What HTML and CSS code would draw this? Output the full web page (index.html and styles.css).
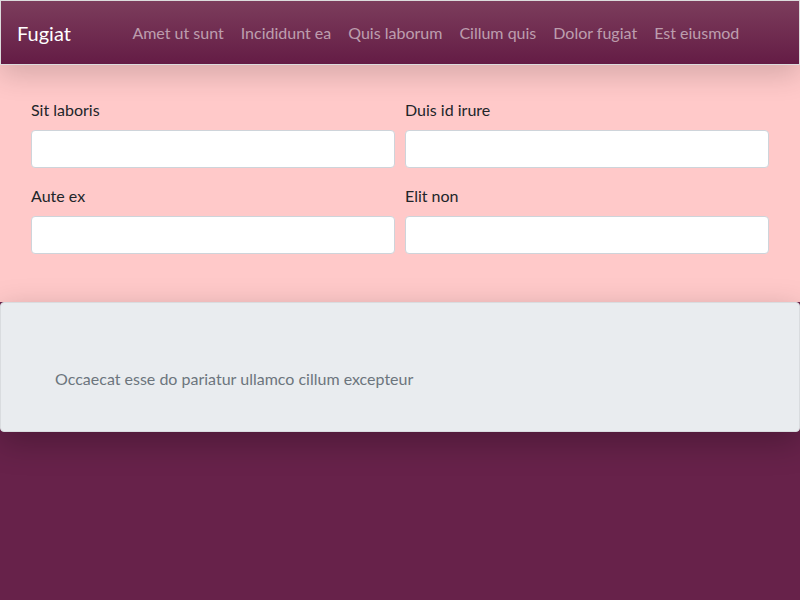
FILE: index.html
```html
<!DOCTYPE html>
<html>
<head>
<meta charset="utf-8">
<link rel="stylesheet" href="styles.css">
</head>
<body>
<nav class="navbar">
  <span class="brand">Fugiat</span>
  <ul class="nav">
    <li><a class="nav-link">Amet ut sunt</a></li>
    <li><a class="nav-link">Incididunt ea</a></li>
    <li><a class="nav-link">Quis laborum</a></li>
    <li><a class="nav-link">Cillum quis</a></li>
    <li><a class="nav-link">Dolor fugiat</a></li>
    <li><a class="nav-link">Est eiusmod</a></li>
  </ul>
</nav>
<section class="form-section">
  <div class="grid">
    <div class="field"><label>Sit laboris</label><input type="text"></div>
    <div class="field"><label>Duis id irure</label><input type="text"></div>
    <div class="field"><label>Aute ex</label><input type="text"></div>
    <div class="field"><label>Elit non</label><input type="text"></div>
  </div>
</section>
<div class="card">
  <p class="lead">Occaecat esse do pariatur ullamco cillum excepteur</p>
</div>
</body>
</html>
```
FILE: styles.css
```css
* { box-sizing: border-box; }
html, body { height: 100%; }
body {
  margin: 0;
  font-family: "Segoe UI", Lato, "Open Sans", sans-serif;
  font-size: 16px;
  line-height: 24px;
  color: #212529;
  background: #67224a;
}
.navbar {
  position: relative;
  z-index: 3;
  height: 65px;
  display: flex;
  align-items: center;
  padding: 0 16px;
  background: linear-gradient(#7c3d5c, #641c45);
  border: 1px solid #dcdcdc;
  box-shadow: 0 10px 28px rgba(0,0,0,0.16);
}
.brand {
  color: #fff;
  font-size: 20px;
  line-height: 30px;
  margin-right: 53px;
}
.nav {
  list-style: none;
  margin: 0;
  padding: 0;
  display: flex;
}
.nav-link {
  display: block;
  padding: 8px 8.5px;
  color: rgba(255,255,255,0.55);
  font-size: 16px;
}
.form-section {
  position: relative;
  z-index: 1;
  background: #ffc9c9;
  padding: 33px 31px 48px;
}
.grid {
  display: grid;
  grid-template-columns: 1fr 1fr;
  column-gap: 10px;
  row-gap: 16px;
}
.field label {
  display: block;
  margin-bottom: 8px;
}
.field input {
  display: block;
  width: 100%;
  height: 38px;
  border: 1px solid #ced4da;
  border-radius: 4px;
  background: #fff;
}
.card {
  position: relative;
  z-index: 2;
  background: #e9ecef;
  border: 1px solid #d9dcdf;
  border-radius: 4px;
  padding: 64px 54px 40px;
  box-shadow: 0 10px 32px rgba(0,0,0,0.25);
}
.lead {
  margin: 0;
  color: #6c757d;
}
```
